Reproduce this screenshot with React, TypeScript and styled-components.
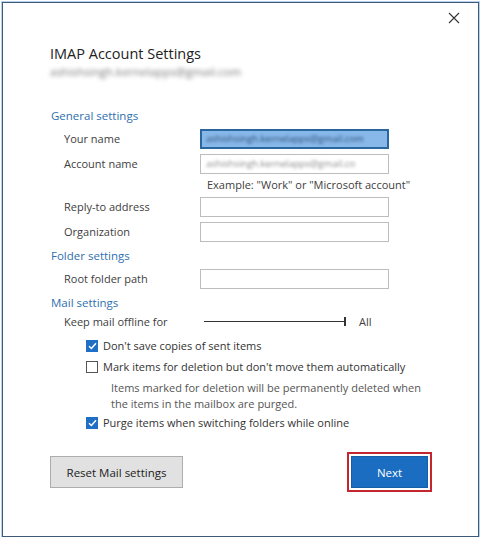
import React from "react";
import styled, { createGlobalStyle } from "styled-components";

const GlobalStyle = createGlobalStyle`
  html, body {
    margin: 0;
    padding: 0;
    background: #ffffff;
  }
  body {
    font-family: "Open Sans", "Noto Sans", sans-serif;
    color: #444;
  }
`;

const Window = styled.div`
  box-sizing: border-box;
  margin: 2px 0 0 2px;
  width: 477px;
  height: 535px;
  border: 1px solid #3d5b78;
  box-shadow: 0 0 0 1px #b9d3ee;
  background: #fff;
  display: flex;
  flex-direction: column;
`;

const TopBar = styled.div`
  display: flex;
  justify-content: flex-end;
  padding: 9px 17px 0 0;
  height: 30px;
  box-sizing: border-box;
`;

const CloseButton = styled.button`
  border: none;
  background: none;
  padding: 0;
  width: 13px;
  height: 13px;
  display: flex;
  cursor: pointer;
`;

const Body = styled.div`
  padding: 10px 0 0 47px;
  display: flex;
  flex-direction: column;
`;

const Title = styled.h1`
  margin: 0;
  font-weight: 400;
  font-size: 14.5px;
  line-height: 22px;
  color: #222;
`;

const Blurred = styled.span<{ $amount?: number }>`
  filter: blur(${({ $amount }) => $amount ?? 1.7}px);
  white-space: nowrap;
`;

const Subtitle = styled.div`
  font-size: 11.5px;
  line-height: 14px;
  color: #777;
  margin-bottom: 27px;
`;

const SectionHeader = styled.div<{ $h: number; $lh?: number }>`
  height: ${({ $h }) => $h}px;
  line-height: ${({ $h, $lh }) => $lh ?? $h}px;
  font-size: 11.5px;
  color: #2f6fae;
  padding-left: 1px;
`;

const FieldRow = styled.div`
  display: grid;
  grid-template-columns: 136px 189px;
  align-items: center;
  height: 25px;
  padding-left: 14px;
`;

const Label = styled.span`
  font-size: 11px;
  color: #404040;
`;

const Input = styled.div<{ $active?: boolean }>`
  box-sizing: border-box;
  height: 20px;
  border: 1px solid ${({ $active }) => ($active ? "#2b679f" : "#bdbdbd")};
  box-shadow: ${({ $active }) => ($active ? "inset 0 0 0 1px #2b679f" : "none")};
  background: ${({ $active }) => ($active ? "#88b8ea" : "#fff")};
  display: flex;
  align-items: center;
  padding: 0 5px;
  overflow: hidden;
  font-size: 9.5px;
  color: ${({ $active }) => ($active ? "#2a4d72" : "#8a8a8a")};
`;

const Hint = styled.div`
  height: 18px;
  line-height: 18px;
  font-size: 11px;
  color: #404040;
  padding-left: 157px;
`;

const SliderRow = styled.div`
  display: grid;
  grid-template-columns: 140px 142px auto;
  align-items: center;
  height: 20px;
  padding-left: 14px;
`;

const Track = styled.div`
  position: relative;
  height: 1px;
  background: #333;
`;

const Thumb = styled.span`
  position: absolute;
  right: 0;
  top: -4px;
  width: 2px;
  height: 9px;
  background: #333;
`;

const SliderValue = styled.span`
  font-size: 11px;
  color: #404040;
  padding-left: 13px;
`;

const Spacer = styled.div<{ $h: number }>`
  height: ${({ $h }) => $h}px;
`;

const CheckRow = styled.label`
  display: flex;
  align-items: center;
  gap: 5px;
  height: 21px;
  padding-left: 36px;
  font-size: 11px;
  color: #333;
`;

const Box = styled.span<{ $checked?: boolean }>`
  box-sizing: border-box;
  width: 12px;
  height: 12px;
  border: 1px solid ${({ $checked }) => ($checked ? "#1f6fc5" : "#555")};
  background: ${({ $checked }) => ($checked ? "#1f6fc5" : "#fff")};
  display: flex;
  align-items: center;
  justify-content: center;
`;

const Note = styled.div`
  padding-left: 61px;
  font-size: 11px;
  line-height: 16px;
  color: #555;
  margin-top: 3px;
  width: 320px;
`;

const Footer = styled.div`
  display: flex;
  justify-content: space-between;
  align-items: center;
  padding: 23px 50px 0 47px;
`;

const Button = styled.button<{ $primary?: boolean }>`
  box-sizing: border-box;
  height: 32px;
  width: ${({ $primary }) => ($primary ? "77px" : "133px")};
  font-family: inherit;
  font-size: 11.5px;
  border: 1px solid ${({ $primary }) => ($primary ? "#155fa8" : "#adadad")};
  background: ${({ $primary }) => ($primary ? "#1a6dc0" : "#e1e1e1")};
  color: ${({ $primary }) => ($primary ? "#fff" : "#222")};
  outline: ${({ $primary }) => ($primary ? "2px solid #c4262e" : "none")};
  outline-offset: 2px;
  cursor: pointer;
`;

const Check = () => (
  <svg width="9" height="8" viewBox="0 0 9 8">
    <path d="M1 4.2 L3.4 6.5 L8 1.2" fill="none" stroke="#fff" strokeWidth="1.5" />
  </svg>
);

type CheckItemProps = { checked?: boolean; children: React.ReactNode };

const CheckItem = ({ checked, children }: CheckItemProps) => (
  <CheckRow>
    <Box $checked={checked}>{checked && <Check />}</Box>
    {children}
  </CheckRow>
);

const fields = [
  { label: "Your name", value: "ashishsingh.kernelapps@gmail.com", active: true },
  { label: "Account name", value: "ashishsingh.kernelapps@gmail.co" },
];

export default function App() {
  return (
    <>
      <GlobalStyle />
      <Window>
        <TopBar>
          <CloseButton aria-label="Close">
            <svg width="12" height="12" viewBox="0 0 12 12">
              <path d="M1 1 L11 11 M11 1 L1 11" stroke="#333" strokeWidth="1.1" />
            </svg>
          </CloseButton>
        </TopBar>
        <Body>
          <Title>IMAP Account Settings</Title>
          <Subtitle>
            <Blurred $amount={1.9}>ashishsingh.kernelapps@gmail.com</Blurred>
          </Subtitle>

          <SectionHeader $h={20}>General settings</SectionHeader>
          {fields.map((f) => (
            <FieldRow key={f.label}>
              <Label>{f.label}</Label>
              <Input $active={f.active}>
                <Blurred>{f.value}</Blurred>
              </Input>
            </FieldRow>
          ))}
          <Hint>Example: "Work" or "Microsoft account"</Hint>
          <FieldRow>
            <Label>Reply-to address</Label>
            <Input />
          </FieldRow>
          <FieldRow>
            <Label>Organization</Label>
            <Input />
          </FieldRow>

          <SectionHeader $h={22} $lh={24}>Folder settings</SectionHeader>
          <FieldRow>
            <Label>Root folder path</Label>
            <Input />
          </FieldRow>

          <SectionHeader $h={20} $lh={24}>Mail settings</SectionHeader>
          <SliderRow>
            <Label>Keep mail offline for</Label>
            <Track>
              <Thumb />
            </Track>
            <SliderValue>All</SliderValue>
          </SliderRow>
          <Spacer $h={4} />
          <CheckItem checked>Don't save copies of sent items</CheckItem>
          <CheckItem>Mark items for deletion but don't move them automatically</CheckItem>
          <Note>
            Items marked for deletion will be permanently deleted when the items in the
            mailbox are purged.
          </Note>
          <CheckItem checked>Purge items when switching folders while online</CheckItem>
        </Body>
        <Footer>
          <Button>Reset Mail settings</Button>
          <Button $primary>Next</Button>
        </Footer>
      </Window>
    </>
  );
}
